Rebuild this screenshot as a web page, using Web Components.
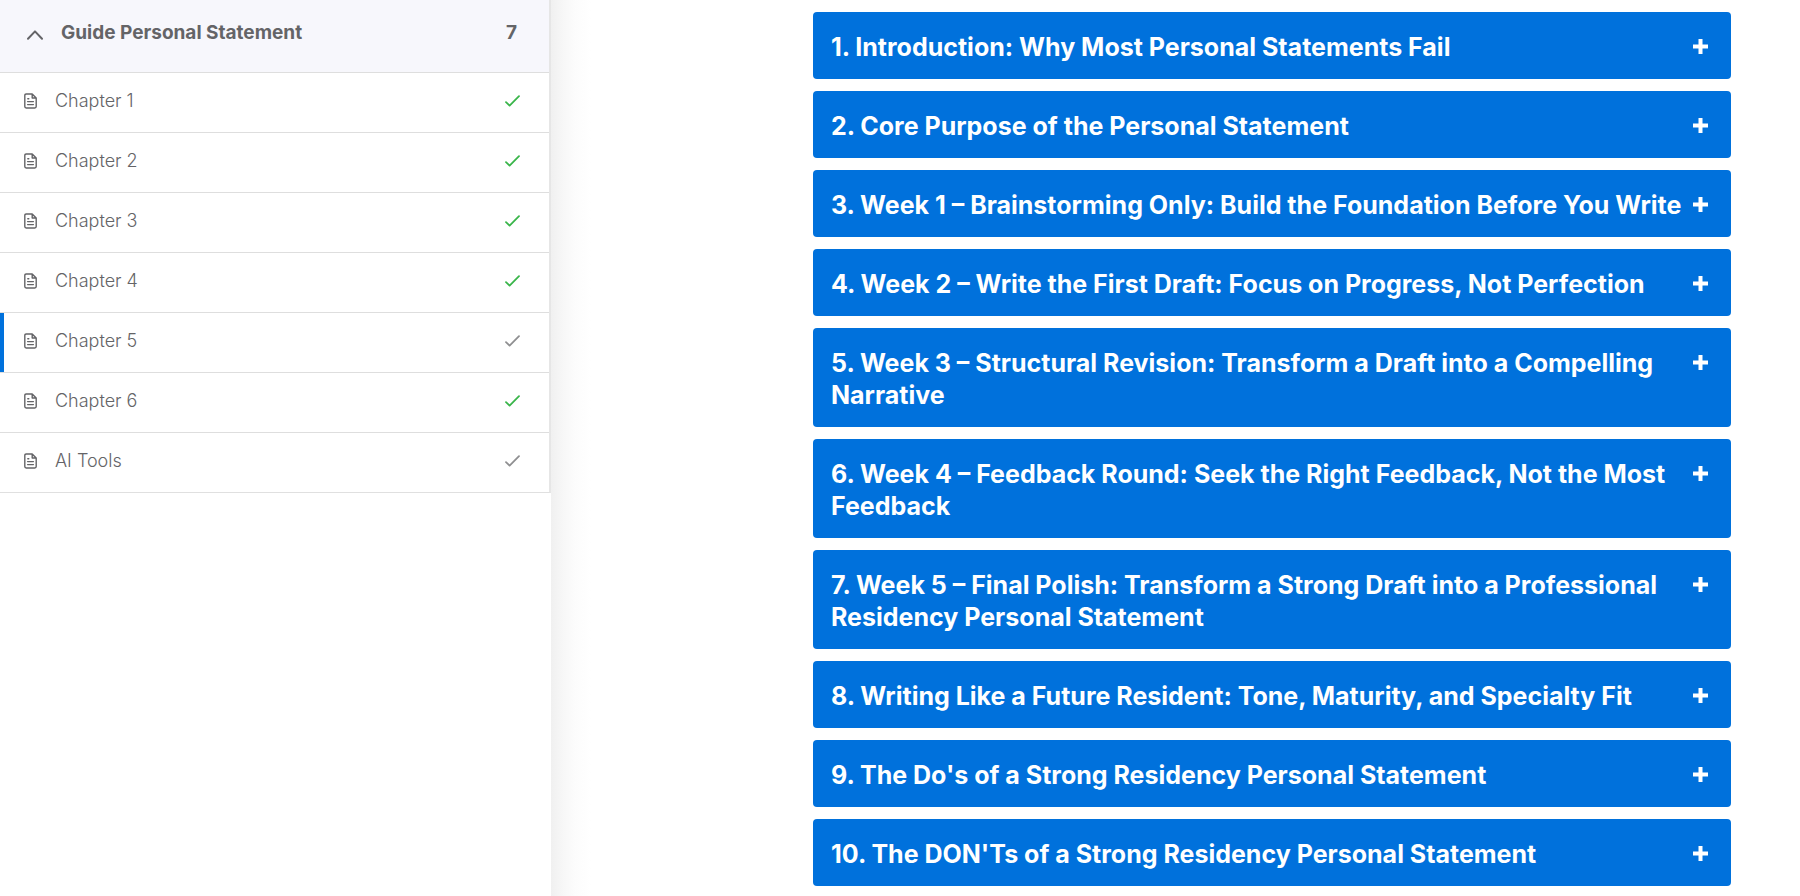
<!DOCTYPE html>
<html lang="en">
<head>
<meta charset="utf-8">
<title>Guide Personal Statement</title>
<style>
  body { margin: 0; background: #fff; font-family: Inter, "Liberation Sans", sans-serif; }
</style>
</head>
<body>
<course-page>
  <course-outline slot="outline" heading="Guide Personal Statement" count="7">
    <chapter-link done>Chapter 1</chapter-link>
    <chapter-link done>Chapter 2</chapter-link>
    <chapter-link done>Chapter 3</chapter-link>
    <chapter-link done>Chapter 4</chapter-link>
    <chapter-link current>Chapter 5</chapter-link>
    <chapter-link done>Chapter 6</chapter-link>
    <chapter-link>AI Tools</chapter-link>
  </course-outline>
  <accordion-item>1. Introduction: Why Most Personal Statements Fail</accordion-item>
  <accordion-item>2. Core Purpose of the Personal Statement</accordion-item>
  <accordion-item>3. Week 1 – Brainstorming Only: Build the Foundation Before You Write</accordion-item>
  <accordion-item>4. Week 2 – Write the First Draft: Focus on Progress, Not Perfection</accordion-item>
  <accordion-item>5. Week 3 – Structural Revision: Transform a Draft into a Compelling Narrative</accordion-item>
  <accordion-item>6. Week 4 – Feedback Round: Seek the Right Feedback, Not the Most Feedback</accordion-item>
  <accordion-item>7. Week 5 – Final Polish: Transform a Strong Draft into a Professional Residency Personal Statement</accordion-item>
  <accordion-item>8. Writing Like a Future Resident: Tone, Maturity, and Specialty Fit</accordion-item>
  <accordion-item>9. The Do's of a Strong Residency Personal Statement</accordion-item>
  <accordion-item>10. The DON'Ts of a Strong Residency Personal Statement</accordion-item>
</course-page>

<script>
class CoursePage extends HTMLElement {
  constructor() {
    super();
    this.attachShadow({ mode: 'open' }).innerHTML = `
      <style>
        :host { display: flex; min-height: 100vh; }
        aside { flex: 0 0 551px; box-sizing: border-box; }
        main {
          flex: 1; min-width: 0; box-sizing: border-box;
          display: flex; flex-direction: column; gap: 12px;
          padding: 12px 69px 10px 262px;
          background: linear-gradient(to right, #f0f0f0 0, #f7f7f7 12px, #fcfcfc 24px, #fff 40px) no-repeat;
        }
      </style>
      <aside><slot name="outline"></slot></aside>
      <main><slot></slot></main>`;
  }
}

class CourseOutline extends HTMLElement {
  connectedCallback() {
    this.attachShadow({ mode: 'open' }).innerHTML = `
      <style>
        :host { display: block; border-right: 2px solid #e6e6e6; border-bottom: 1px solid #e0e0e0; }
        button {
          display: flex; align-items: center; width: 100%; height: 72px; box-sizing: border-box;
          margin: 0; padding: 0 32px 6px 27px; border: 0;
          background: #f7f7fc; color: #646467;
          font: 700 19px/28px Inter, "Liberation Sans", sans-serif; text-align: left; cursor: pointer;
        }
        svg { width: 16px; height: 10px; margin: 4px 18px 0 0; }
        .heading { flex: 1; }
      </style>
      <button type="button" aria-expanded="true">
        <svg viewBox="0 0 16 10" fill="none" stroke="#646467" stroke-width="2" stroke-linecap="round" stroke-linejoin="round" aria-hidden="true"><path d="M1 8.8 8 1.4l7 7.4"/></svg>
        <span class="heading"></span><span class="count"></span>
      </button>
      <nav><slot></slot></nav>`;
    this.shadowRoot.querySelector('.heading').textContent = this.getAttribute('heading');
    this.shadowRoot.querySelector('.count').textContent = this.getAttribute('count');
  }
}

class ChapterLink extends HTMLElement {
  constructor() {
    super();
    this.attachShadow({ mode: 'open' }).innerHTML = `
      <style>
        :host { display: block; --edge: transparent; --tick: #8f8f91; }
        :host([done]) { --tick: #39b54a; }
        :host([current]) { --edge: #0071dc; }
        a {
          display: flex; align-items: center; height: 60px; box-sizing: border-box;
          padding: 0 29px 3px 24px;
          border-top: 1px solid #dedede;
          box-shadow: inset 4px 0 var(--edge);
          color: #646467; text-decoration: none;
          font: 300 18px/26px Inter, "Liberation Sans", sans-serif;
        }
        .doc { width: 13px; height: 16px; margin-right: 18px; }
        .label { flex: 1; }
        .tick { width: 15px; height: 12px; color: var(--tick); }
      </style>
      <a href="#">
        <svg class="doc" viewBox="0 0 13 16" fill="none" stroke="#646467" stroke-width="1.4" stroke-linejoin="round" stroke-linecap="round" aria-hidden="true">
          <path d="M8.2 1H2.2Q.8 1 .8 2.4v11.2Q.8 15 2.2 15h8.6q1.4 0 1.4-1.4V5zM8.2 1v4h4M3.8 5.8h1M3.6 8.6h5.8M3.6 11.6h5.8"/>
        </svg>
        <span class="label"><slot></slot></span>
        <svg class="tick" viewBox="0 0 15 12" fill="none" stroke="currentColor" stroke-width="1.8" stroke-linecap="round" stroke-linejoin="round" aria-hidden="true"><path d="M1 7.2 4.6 10.6 14 1.2"/></svg>
      </a>`;
  }
}

class AccordionItem extends HTMLElement {
  constructor() {
    super();
    this.attachShadow({ mode: 'open' }).innerHTML = `
      <style>
        :host { display: block; }
        button {
          display: flex; align-items: flex-start; gap: 6px; width: 100%; box-sizing: border-box;
          margin: 0; padding: 19px 23px 16px 18px; border: 0; border-radius: 4px;
          background: #0071dc; color: #fff; text-align: left; cursor: pointer;
          font: 700 25px/32px Inter, "Liberation Sans", sans-serif;
        }
        .title { flex: 1; }
        svg { flex: none; width: 15px; height: 15px; margin-top: 8px; }
      </style>
      <button type="button" aria-expanded="false">
        <span class="title"><slot></slot></span>
        <svg viewBox="0 0 15 15" stroke="#fff" stroke-width="4" stroke-linecap="butt" aria-hidden="true"><path d="M7.5 0v15M0 7.5h15"/></svg>
      </button>`;
  }
}

customElements.define('course-page', CoursePage);
customElements.define('course-outline', CourseOutline);
customElements.define('chapter-link', ChapterLink);
customElements.define('accordion-item', AccordionItem);
</script>
</body>
</html>
